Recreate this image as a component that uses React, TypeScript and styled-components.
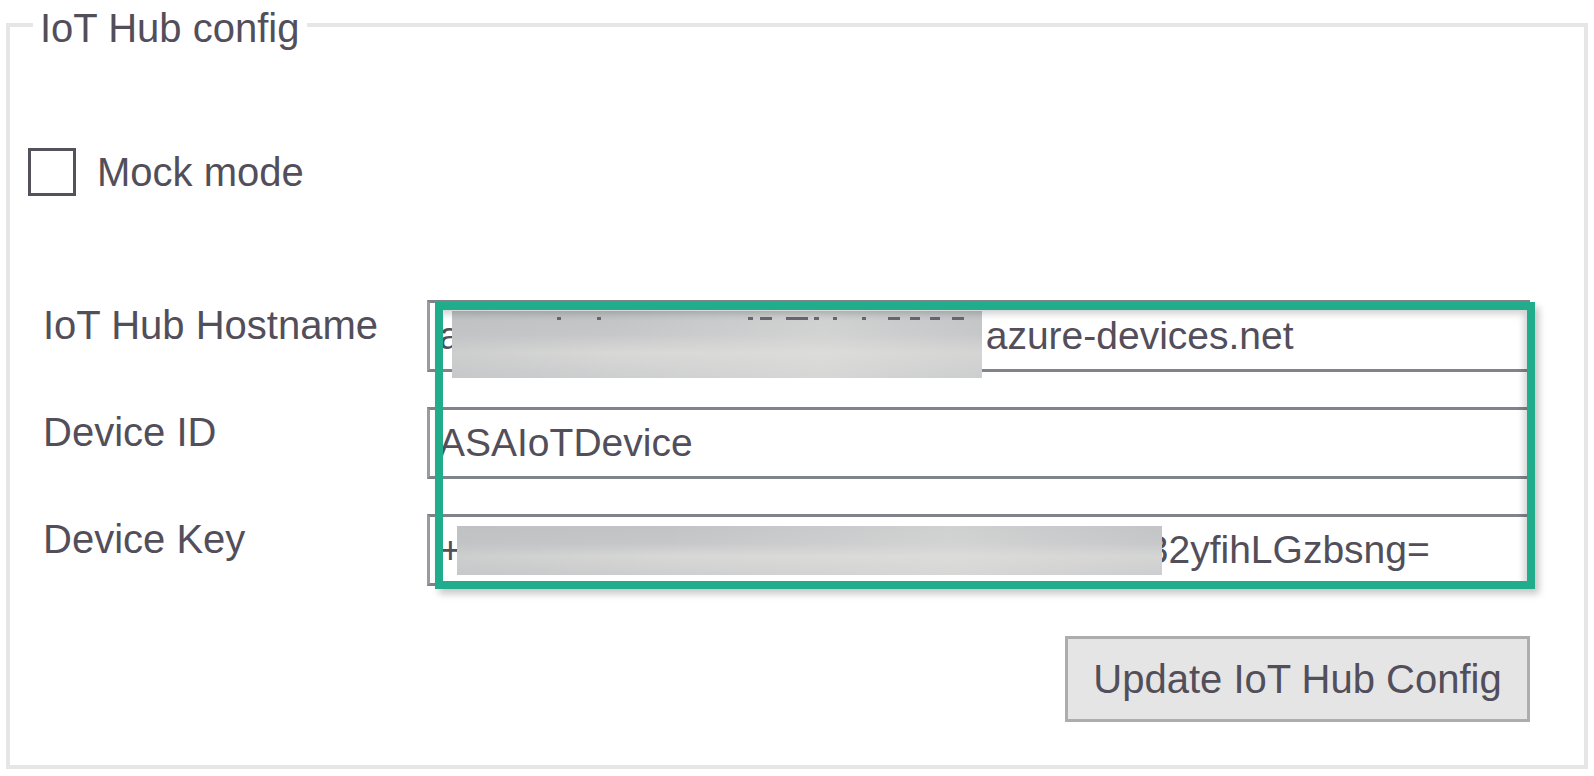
import React from "react";
import styled, { createGlobalStyle } from "styled-components";

const GlobalStyle = createGlobalStyle`
  html, body {
    margin: 0;
    padding: 0;
    background: #ffffff;
  }
  body {
    font-family: "Liberation Sans", Arial, sans-serif;
    color: #524e5a;
  }
`;

const Page = styled.div`
  width: 1594px;
  height: 776px;
  padding: 0 6px;
  box-sizing: border-box;
  overflow: hidden;
`;

const Group = styled.fieldset`
  margin: 0;
  width: 1582px;
  height: 769px;
  box-sizing: border-box;
  border: 4px solid #e6e6e4;
  padding: 0 54px 0 18px;
  min-inline-size: 0;
`;

const Legend = styled.legend`
  margin-left: 5px;
  padding: 6px 8px 0 7px;
  font-size: 40px;
  line-height: 44px;
  color: #524e5a;
`;

const CheckRow = styled.label`
  display: flex;
  align-items: center;
  gap: 21px;
  margin-top: 98px;
  height: 48px;
  font-size: 40px;
  line-height: 48px;
`;

const Box = styled.span`
  width: 48px;
  height: 48px;
  box-sizing: border-box;
  border: 3px solid #55515b;
  background: #ffffff;
`;

const Form = styled.div`
  position: relative;
  display: grid;
  grid-template-columns: 399px 1fr;
  grid-template-rows: repeat(3, 72px) auto;
  row-gap: 35px;
  margin-top: 104px;
`;

const Label = styled.div`
  grid-column: 1;
  padding: 3px 0 0 15px;
  font-size: 40px;
  line-height: 44px;
`;

const Field = styled.div`
  grid-column: 2;
  display: flex;
  align-items: center;
  box-sizing: border-box;
  height: 72px;
  padding-left: 9px;
  background: #ffffff;
  border: 3px solid #80848a;
  border-left-color: #989ba0;
  font-size: 39px;
  line-height: 44px;
  white-space: pre;
  overflow: visible;
`;

const Redaction = styled.span<{ $w: number; $h: number; $shift: number; $before: number; $after: number; $marks?: string }>`
  position: relative;
  z-index: 1;
  flex: none;
  width: ${(p) => p.$w}px;
  height: ${(p) => p.$h}px;
  margin: ${(p) => (p.$shift > 0 ? `${p.$shift}px` : 0)} ${(p) => p.$after}px 0 ${(p) => p.$before}px;
  background: ${(p) => (p.$marks ? p.$marks + "," : "")}
    linear-gradient(90deg, rgba(188, 190, 193, 0.4) 0%, rgba(255, 255, 255, 0) 30%, rgba(225, 225, 222, 0.45) 70%, rgba(200, 201, 203, 0.2) 100%),
    linear-gradient(180deg, #c1c3c5 0%, #c6c7c9 35%, #d8d8d6 62%, #cdcecf 100%);
`;

const Overlay = styled.div`
  position: absolute;
  z-index: 2;
  grid-column: 2;
  grid-row: 1 / 4;
  top: 2px;
  left: 8px;
  right: -5px;
  bottom: -3px;
  border: 8px solid #21ad8c;
  box-shadow: 4px 5px 7px rgba(0, 0, 0, 0.22),
    inset -6px 7px 7px -3px rgba(0, 0, 0, 0.18);
  pointer-events: none;
`;

const UpdateButton = styled.button`
  grid-column: 2;
  justify-self: end;
  margin-top: 15px;
  width: 465px;
  height: 86px;
  box-sizing: border-box;
  background: #e5e5e5;
  border: 3px solid #adadad;
  font-family: "Liberation Sans", Arial, sans-serif;
  font-size: 40px;
  color: #524e5a;
  padding: 0;
`;

// dark stubs of the hidden hostname poking out above the blur
const remnants: [number, number][] = [
  [105, 4], [145, 4], [296, 5], [308, 12], [334, 22], [362, 5],
  [381, 4], [410, 4], [436, 12], [458, 10], [478, 10], [500, 12],
];
const marks = remnants
  .map(([x, w]) => `linear-gradient(#6a6570, #6a6570) ${x}px 6px / ${w}px 3px no-repeat`)
  .join(",");

export default function App() {
  return (
    <Page>
      <GlobalStyle />
      <Group>
        <Legend>IoT Hub config</Legend>
        <CheckRow>
          <Box />
          Mock mode
        </CheckRow>
        <Form>
          <Label>IoT Hub Hostname</Label>
          <Field>
            a
            <Redaction $w={530} $h={67} $shift={17} $before={-9} $after={4} $marks={marks} />
            azure-devices.net
          </Field>
          <Label>Device ID</Label>
          <Field>ASAIoTDevice</Field>
          <Label>Device Key</Label>
          <Field>
            +
            <Redaction $w={705} $h={49} $shift={0} $before={-5} $after={-15} />
            32yfihLGzbsng=
          </Field>
          <Overlay />
          <UpdateButton>Update IoT Hub Config</UpdateButton>
        </Form>
      </Group>
    </Page>
  );
}
